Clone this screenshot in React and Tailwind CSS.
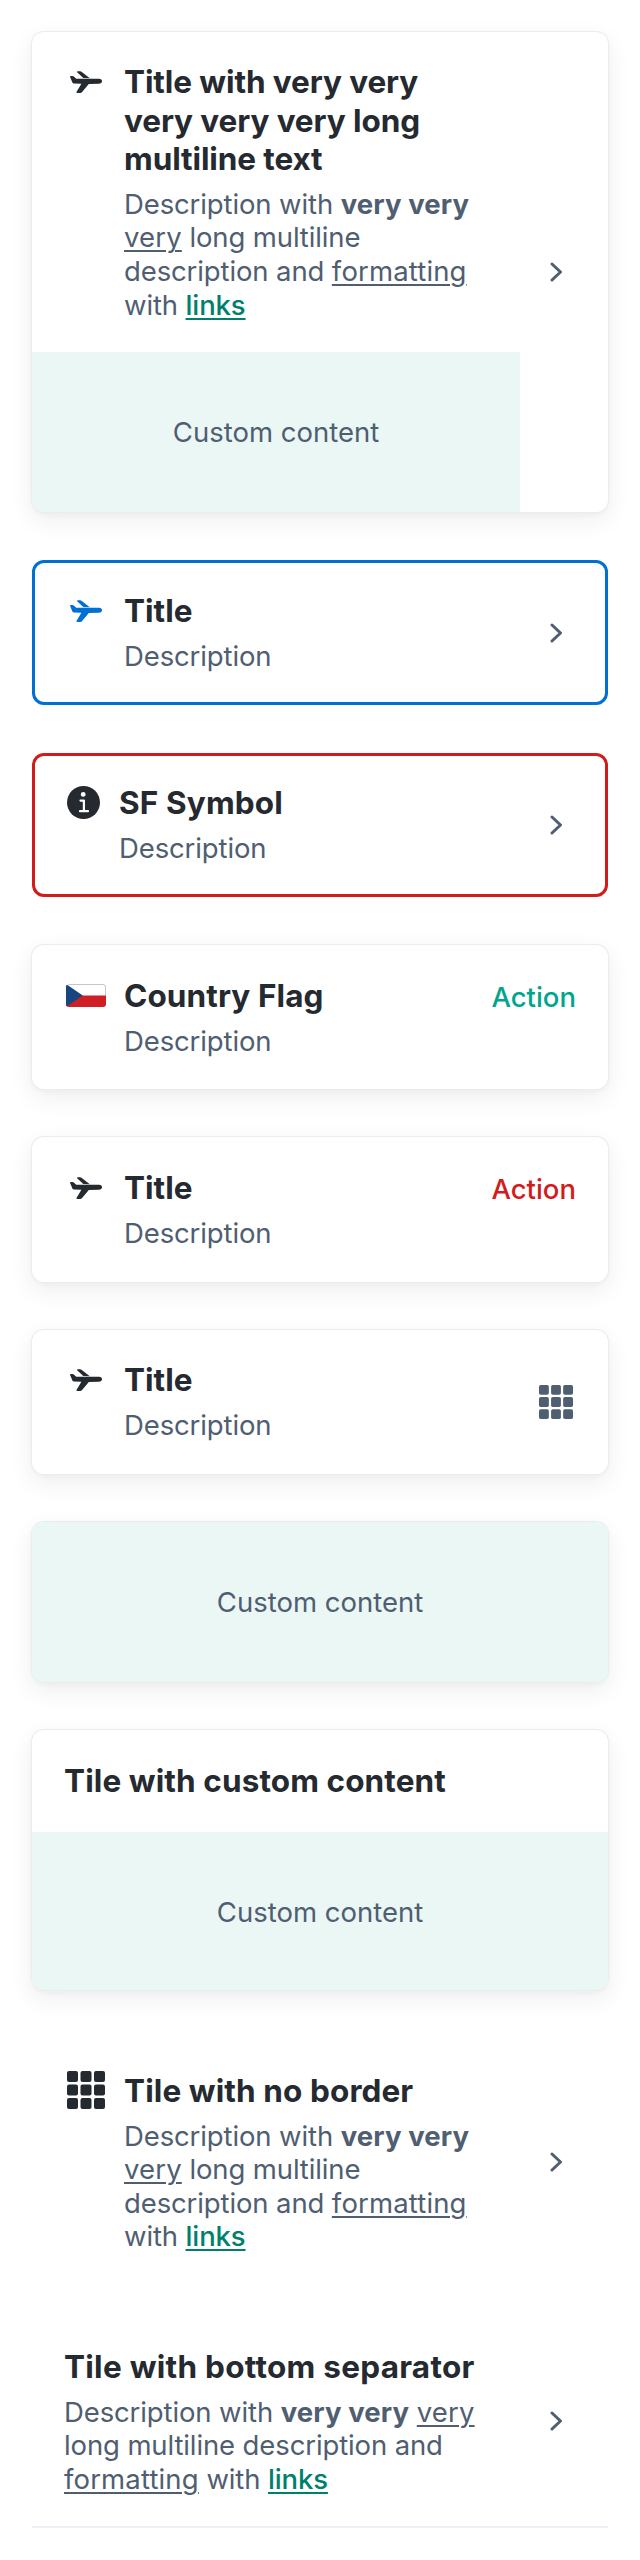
import React from "react";

function Plane({ className = "text-[#252a31]" }) {
  return (
    <div className="pl-1.5 pb-px">
      <svg viewBox="0 0 32 22" className={`h-[22px] w-8 ${className}`} fill="currentColor">
        <path d="M.9 4.900h1.500c.6 0 1 .2 1.400.6l2.400 2.300H29c2 0 3 1.100 3 2.400s-1.200 2.500-3.200 2.500l-10 .3-6.900 8.200c-.5.5-1 .8-1.700.8H7.300c-.8 0-1.100-.5-.7-1.200l4.800-8-7.200-.2c-1 0-1.600-.4-1.900-1.300L.1 6C-.1 5.300.2 4.900.9 4.900z" />
        <path d="M7.900.2h2.200c.6 0 1 .2 1.400.5l8.300 6.500-6.500-.2-5.900-5.500C6.800.8 7.100.2 7.900.2z" />
      </svg>
    </div>
  );
}

function Grid({ className }) {
  const cells = [0, 1, 2].flatMap((r) => [0, 1, 2].map((c) => [r, c]));
  return (
    <svg viewBox="0 0 38 38" className={className} fill="currentColor">
      {cells.map(([r, c]) => (
        <rect key={`${r}${c}`} x={c * 13.5} y={r * 13.5} width="11" height="11" rx="2" />
      ))}
    </svg>
  );
}

function Info() {
  return (
    <svg viewBox="0 0 33 33" className="mb-0.5 ml-[3px] size-[33px]">
      <circle cx="16.500" cy="16.500" r="16.500" fill="#252a31" />
      <circle cx="16.200" cy="8.400" r="2.400" fill="#fff" />
      <path d="M13.500 14.600h3.400v10.500M13 25.200h8" fill="none" stroke="#fff" strokeWidth="2.200" strokeLinecap="round" strokeLinejoin="round" />
    </svg>
  );
}

function Flag() {
  return (
    <svg viewBox="0 0 40 23" className="mb-[3px] ml-0.5 h-[23px] w-10">
      <clipPath id="flag"><rect width="40" height="23" rx="3" /></clipPath>
      <g clipPath="url(#flag)">
        <path d="M0 0h40v12H0z" fill="#fff" />
        <path d="M0 11.500h40V23H0z" fill="#d01f24" />
        <path d="M0 0l16.800 11.500L0 23z" fill="#18457d" />
      </g>
      <path d="M2.500 .5h34.500a2.500 2.500 0 0 1 2.500 2.500v8.500" fill="none" stroke="#18355d" strokeOpacity=".28" />
    </svg>
  );
}

function Chevron({ className = "pr-[45px]" }) {
  return (
    <div className={`flex shrink-0 items-center ${className}`}>
      <svg viewBox="0 0 13 20" className="h-5 w-[13px]" fill="none" stroke="#4f5e71" strokeWidth="3" strokeLinecap="round" strokeLinejoin="round">
        <path d="M2 2l8.500 8L2 18" />
      </svg>
    </div>
  );
}

const Title = ({ className = "", children }) => (
  <h2 className={`whitespace-nowrap text-[31.500px] font-bold leading-[38.600px] text-[#252a31] ${className}`}>{children}</h2>
);
const Desc = ({ children }) => (
  <p className="mt-[9px] whitespace-nowrap text-[27.500px] leading-[33.600px] tracking-[-0.12px] text-[#4f5e71]">{children}</p>
);
const B = ({ children }) => <b className="tracking-[0.1px]">{children}</b>;
const U = ({ children }) => <span className="tracking-[0.15px] underline decoration-2 underline-offset-[3px]">{children}</span>;
const Link = () => <a className="font-medium text-[#007f6d] underline decoration-2 underline-offset-[3px]">links</a>;

const LongText = () => (
  <Desc>
    Description with <B>very very</B><br />
    <U>very</U> long multiline<br />
    description and <U>formatting</U><br />
    with <Link />
  </Desc>
);

const Custom = ({ className = "" }) => (
  <div className={`flex h-40 items-center justify-center bg-[#eaf7f5] pt-0.5 text-[27.500px] text-[#4f5e71] ${className}`}>
    Custom content
  </div>
);

const card = "flex overflow-hidden rounded-[12px] bg-white shadow-[0_0_0_1px_#e8edf1,0_8px_24px_rgba(37,42,49,0.08),0_2px_6px_rgba(37,42,49,0.04)]";

function Row({ icon, iconWidth = "w-[60px]", children }) {
  return (
    <div className="flex">
      <div className={`flex h-[39px] shrink-0 items-center ${iconWidth}`}>{icon}</div>
      <div>{children}</div>
    </div>
  );
}

export default function App() {
  return (
    <main className="flex h-[2560px] w-[640px] flex-col overflow-hidden bg-white px-8 pt-8 font-['Inter',sans-serif]">
      <section className={`${card} h-[480px] justify-between`}>
        <div className="w-[488px] shrink-0">
          <div className="h-80 px-8 pt-[31px]">
            <Row icon={<Plane />}>
              <Title className="tracking-[-0.1px]">Title with very very<br />very very very long<br />multiline text</Title>
              <LongText />
            </Row>
          </div>
          <Custom />
        </div>
        <Chevron />
      </section>

      <section className="mt-12 flex h-[145px] justify-between rounded-[12px] border-3 border-[#0070d2] pl-[29px]">
        <div className="pt-[29px]">
          <Row icon={<Plane className="text-[#0070d2]" />}>
            <Title>Title</Title><Desc>Description</Desc>
          </Row>
        </div>
        <Chevron className="pr-[42px]" />
      </section>

      <section className="mt-12 flex h-[144px] justify-between rounded-[12px] border-3 border-[#d21c1c] pl-[29px]">
        <div className="pt-[28px]">
          <Row icon={<Info />} iconWidth="w-[55px]">
            <Title className="tracking-[0.15px]">SF Symbol</Title><Desc>Description</Desc>
          </Row>
        </div>
        <Chevron className="pr-[42px]" />
      </section>

      <section className={`${card} mt-12 h-[144px] justify-between px-8 pt-8`}>
        <Row icon={<Flag />}><Title className="tracking-[0.1px]">Country Flag</Title><Desc>Description</Desc></Row>
        <button className="h-[41px] text-[27.500px] font-medium text-[#00a58e]">Action</button>
      </section>

      <section className={`${card} mt-12 h-[145px] justify-between px-8 pt-8`}>
        <Row icon={<Plane />}><Title>Title</Title><Desc>Description</Desc></Row>
        <button className="h-[41px] text-[27.500px] font-medium text-[#d21c1c]">Action</button>
      </section>

      <section className={`${card} mt-12 h-[144px] justify-between px-8 pt-[31px]`}>
        <Row icon={<Plane />}><Title>Title</Title><Desc>Description</Desc></Row>
        <Grid className="mr-[3px] mt-6 size-[34px] text-[#4f5e71]" />
      </section>

      <section className={`${card} mt-12`}><Custom className="w-full" /></section>

      <section className={`${card} mt-12 h-[260px] flex-col`}>
        <div className="h-[102px] shrink-0 px-8 pt-8"><Title className="tracking-[0.1px]">Tile with custom content</Title></div>
        <Custom className="shrink-0" />
      </section>

      <section className="mt-12 flex h-[248px] justify-between pl-8">
        <div className="pt-[34px]">
          <Row icon={<Grid className="mb-[3px] ml-[3px] size-[38px] shrink-0 text-[#252a31]" />}>
            <Title className="tracking-[0.1px]">Tile with no border</Title><LongText />
          </Row>
        </div>
        <Chevron />
      </section>

      <section className="mt-[30px] flex h-[212px] justify-between border-b-2 border-[#edf1f5] pl-8">
        <div className="pt-8">
          <Title className="tracking-[0.27px]">Tile with bottom separator</Title>
          <Desc>
            Description with <B>very very</B> <U>very</U><br />
            long multiline description and<br />
            <U>formatting</U> with <Link />
          </Desc>
        </div>
        <Chevron />
      </section>
    </main>
  );
}
